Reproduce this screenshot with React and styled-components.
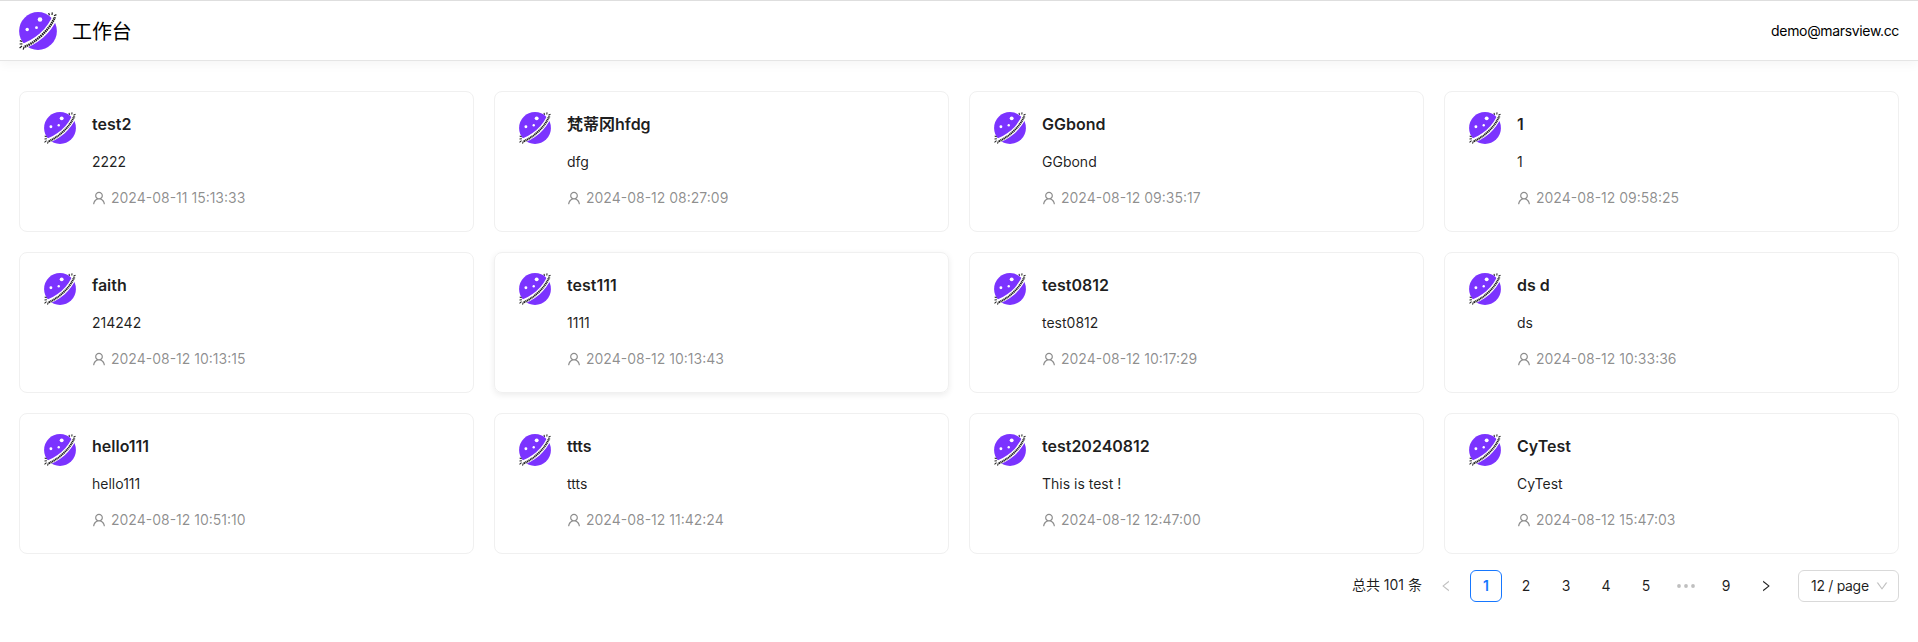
import React from "react";
import styled, { createGlobalStyle, css } from "styled-components";
import { AiOutlineUser, AiOutlineLeft, AiOutlineRight, AiOutlineDown } from "react-icons/ai";

const GlobalStyle = createGlobalStyle`
  *, *::before, *::after { box-sizing: border-box; }
  body {
    margin: 0;
    background: #fff;
    color: rgba(0, 0, 0, 0.88);
    font-family: Inter, "Noto Sans CJK SC", sans-serif;
    font-size: 14px;
    line-height: 22px;
  }
`;

const Page = styled.div`
  min-height: 642px;
`;

const Header = styled.header`
  display: flex;
  align-items: center;
  justify-content: space-between;
  height: 61px;
  padding: 1px 19px 0;
  border-top: 1px solid #dedede;
  border-bottom: 1px solid #e5e5e5;
  box-shadow: 0 4px 10px rgba(0, 0, 0, 0.04);
  color: #000;
`;

const Brand = styled.div`
  display: flex;
  align-items: center;
  gap: 15px;
  font-size: 20px;
`;

const BrandName = styled.span`
  padding-top: 2px;
  letter-spacing: -0.1px;
`;

const Email = styled.span`
  letter-spacing: -0.34px;
`;

const Grid = styled.main`
  display: grid;
  grid-template-columns: repeat(4, 1fr);
  gap: 20px;
  padding: 30px 19px 0;
`;

const Card = styled.article`
  display: flex;
  gap: 16px;
  height: 141px;
  padding: 20px 24px;
  border: 1px solid #f0f0f0;
  border-radius: 8px;
  ${(p) => p.$raised && css`box-shadow: 0 2px 6px rgba(0, 0, 0, 0.08);`}
`;

const CardBody = styled.div`
  display: flex;
  flex-direction: column;
`;

const CardTitle = styled.h3`
  margin: 0 0 15px;
  font-size: 16px;
  font-weight: 600;
  line-height: 24px;
`;

const CardText = styled.p`
  margin: 0 0 14px;
`;

const Meta = styled.div`
  display: flex;
  align-items: center;
  gap: 4px;
  margin-left: -1px;
  color: rgba(0, 0, 0, 0.45);
`;

const Pagination = styled.nav`
  display: flex;
  align-items: center;
  justify-content: flex-end;
  gap: 8px;
  padding: 16px 19px 0;
`;

const Total = styled.span`
  line-height: 30px;
  height: 32px;
`;

const PageItem = styled.button`
  display: flex;
  align-items: center;
  justify-content: center;
  width: 32px;
  height: 32px;
  padding: 0;
  border: 1px solid ${(p) => (p.$active ? "#1677ff" : "transparent")};
  border-radius: 6px;
  background: transparent;
  color: ${(p) => (p.$active ? "#1677ff" : p.$muted ? "rgba(0, 0, 0, 0.25)" : "rgba(0, 0, 0, 0.88)")};
  font: inherit;
  font-weight: ${(p) => (p.$active ? 600 : 400)};
`;

const SizeSelect = styled.button`
  display: flex;
  align-items: center;
  justify-content: space-between;
  width: 101px;
  height: 32px;
  margin-left: 8px;
  padding: 0 9px 0 12px;
  border: 1px solid #d9d9d9;
  border-radius: 6px;
  background: #fff;
  color: inherit;
  font: inherit;
  letter-spacing: -0.3px;
  svg { color: rgba(0, 0, 0, 0.25); }
`;

const LogoSvg = styled.svg`
  flex: none;
  display: block;
`;

function Logo({ size }) {
  return (
    <LogoSvg width={size} height={size} viewBox="0 0 38 38">
      <circle cx="19" cy="19" r="18.9" fill="#7b33ff" />
      <path d="M37 2 Q33 14 22.5 23.5 Q12 32.5 0 35.5" fill="none" stroke="#fff" strokeWidth="5.4" />
      <path
        d="M30.5 3.2 L29.6 1 M33 3 L33.3 0.4 M35 3.8 L37.4 2.6 M34.5 5.6 L37 6 M3.2 29.5 L0.8 28.6 M3.4 31.8 L0.6 32 M3 34 L0.6 36 M5 35 L4.2 37.6"
        fill="none"
        stroke="#222"
        strokeWidth="1.2"
      />
      <path d="M35.2 6.5 Q31.5 15 22.5 23.5 Q13 32 5 35" fill="none" stroke="#222" strokeWidth="2.4" strokeDasharray="1.5 0.6" />
      <circle cx="21" cy="7.5" r="2.3" fill="#fff" />
      <circle cx="8.2" cy="17.5" r="1.7" fill="#fff" />
      <circle cx="17.5" cy="15.7" r="1.4" fill="#fff" />
    </LogoSvg>
  );
}

const projects = [
  ["test2", "2222", "2024-08-11 15:13:33"],
  ["梵蒂冈hfdg", "dfg", "2024-08-12 08:27:09"],
  ["GGbond", "GGbond", "2024-08-12 09:35:17"],
  ["1", "1", "2024-08-12 09:58:25"],
  ["faith", "214242", "2024-08-12 10:13:15"],
  ["test111", "1111", "2024-08-12 10:13:43"],
  ["test0812", "test0812", "2024-08-12 10:17:29"],
  ["ds d", "ds", "2024-08-12 10:33:36"],
  ["hello111", "hello111", "2024-08-12 10:51:10"],
  ["ttts", "ttts", "2024-08-12 11:42:24"],
  ["test20240812", "This is test !", "2024-08-12 12:47:00"],
  ["CyTest", "CyTest", "2024-08-12 15:47:03"],
];

export default function App() {
  return (
    <Page>
      <GlobalStyle />
      <Header>
        <Brand>
          <Logo size={38} />
          <BrandName>工作台</BrandName>
        </Brand>
        <Email>demo@marsview.cc</Email>
      </Header>
      <Grid>
        {projects.map(([title, text, date], i) => (
          <Card key={title} $raised={i === 5}>
            <Logo size={32} />
            <CardBody>
              <CardTitle>{title}</CardTitle>
              <CardText>{text}</CardText>
              <Meta>
                <AiOutlineUser size={16} />
                <span>{date}</span>
              </Meta>
            </CardBody>
          </Card>
        ))}
      </Grid>
      <Pagination>
        <Total>总共 101 条</Total>
        <PageItem $muted><AiOutlineLeft size={14} /></PageItem>
        <PageItem $active>1</PageItem>
        {[2, 3, 4, 5].map((n) => <PageItem key={n}>{n}</PageItem>)}
        <PageItem $muted>
          <svg width="18" height="4" viewBox="0 0 18 4" fill="currentColor">
            <circle cx="2" cy="2" r="1.9" />
            <circle cx="9" cy="2" r="1.9" />
            <circle cx="16" cy="2" r="1.9" />
          </svg>
        </PageItem>
        <PageItem>9</PageItem>
        <PageItem><AiOutlineRight size={14} /></PageItem>
        <SizeSelect>
          <span>12 / page</span>
          <AiOutlineDown size={14} />
        </SizeSelect>
      </Pagination>
    </Page>
  );
}
